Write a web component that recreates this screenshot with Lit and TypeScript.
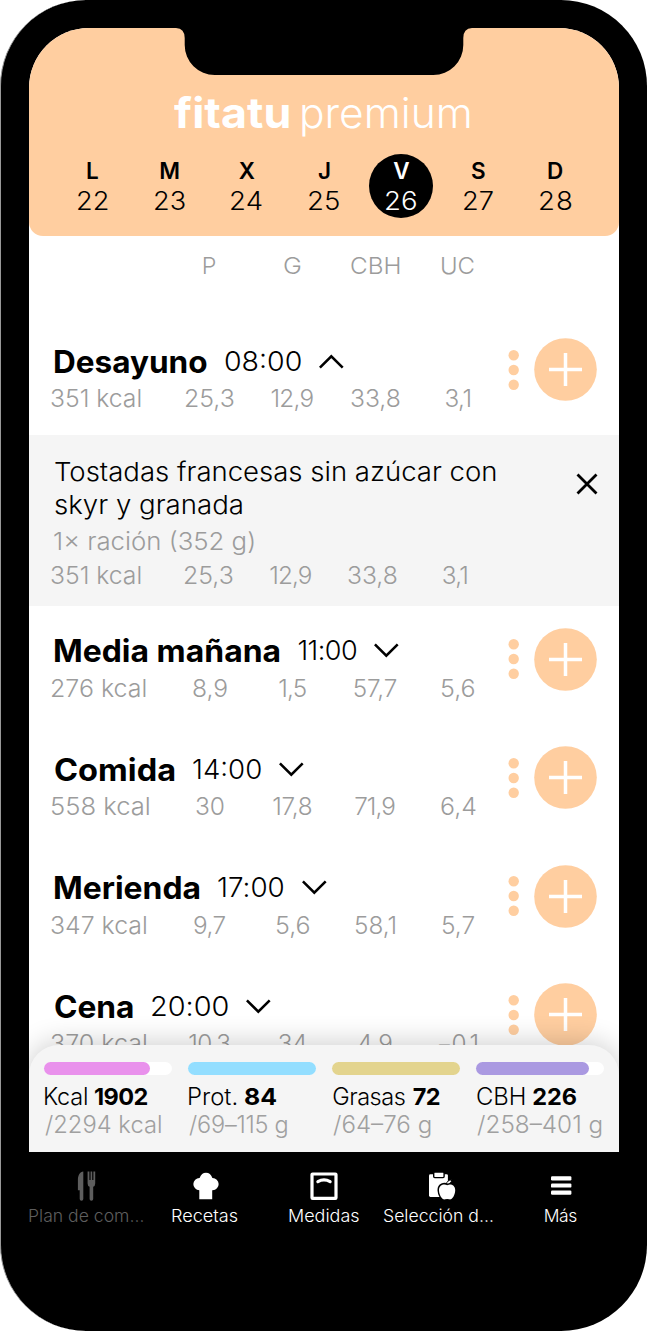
import { LitElement, html, css, svg, nothing } from "lit";
import { customElement, property } from "lit/decorators.js";

type Label = [text: string, width: number];

/** A single line of text, widened and tracked to span a given width. */
@customElement("fit-text")
class FitText extends LitElement {
  static styles = css`
    :host {
      display: inline-block;
      white-space: nowrap;
      flex: none;
    }
    .line {
      display: block;
      transform-origin: 0 50%;
    }
  `;
  @property() text = "";
  @property({ type: Number }) width = 0;

  updated() {
    const line = this.renderRoot.querySelector(".line") as HTMLElement;
    const style = getComputedStyle(this);
    const ctx = document.createElement("canvas").getContext("2d")!;
    ctx.font = `${style.fontWeight} ${style.fontSize} ${style.fontFamily}`;
    const m = ctx.measureText(this.text);
    const gaps = [...this.text].length - 1;
    const left = m.actualBoundingBoxLeft;
    const ink = m.actualBoundingBoxRight + left;
    const stretch = Math.min(Math.max(this.width / ink, 1), 1.09);
    this.style.width = `${this.width}px`;
    line.style.transform = `scaleX(${stretch})`;
    line.style.marginLeft = `${left * stretch + (gaps > 0 ? 0 : (this.width - ink * stretch) / 2)}px`;
    if (gaps > 0) line.style.letterSpacing = `${(this.width / stretch - ink) / gaps}px`;
  }

  render() {
    return html`<span class="line">${this.text}</span>`;
  }
}

const fit = ([text, width]: Label, cls = "") =>
  html`<fit-text class=${cls} .text=${text} .width=${width}></fit-text>`;

const days: [Label, Label][] = [
  [["L", 11], ["22", 29.5]],
  [["M", 18], ["23", 29.5]],
  [["X", 14], ["24", 31]],
  [["J", 11], ["25", 30]],
  [["V", 16], ["26", 30]],
  [["S", 13], ["27", 28.5]],
  [["D", 15], ["28", 31]],
];

const macroHeads: Label[] = [["P", 12], ["G", 17], ["CBH", 48], ["UC", 32]];

interface Meal {
  name: Label;
  time: Label;
  open?: boolean;
  kcal: Label;
  macros: Label[];
}

const meals: Meal[] = [
  { name: ["Desayuno", 151.5], time: ["08:00", 75.5], open: true, kcal: ["351 kcal", 89.5],
    macros: [["25,3", 49], ["12,9", 42], ["33,8", 49], ["3,1", 25]] },
  { name: ["Media mañana", 225], time: ["11:00", 57.5], kcal: ["276 kcal", 94.5],
    macros: [["8,9", 34.5], ["1,5", 26.5], ["57,7", 43], ["5,6", 34]] },
  { name: ["Comida", 120], time: ["14:00", 67.5], kcal: ["558 kcal", 98],
    macros: [["30", 28], ["17,8", 38.5], ["71,9", 40], ["6,4", 34.5]] },
  { name: ["Merienda", 145], time: ["17:00", 65], kcal: ["347 kcal", 95],
    macros: [["9,7", 31.5], ["5,6", 34], ["58,1", 40.5], ["5,7", 32.5]] },
  { name: ["Cena", 78.5], time: ["20:00", 75.5], kcal: ["370 kcal", 95],
    macros: [["10,3", 41], ["34", 27.5], ["4,9", 34], ["−0,1", 39]] },
];

const totals: { name: Label; value: Label; goal: Label; pct: number; tone: string }[] = [
  { name: ["Kcal", 42], value: ["1902", 52.5], goal: ["/2294 kcal", 116], pct: 83, tone: "pink" },
  { name: ["Prot.", 47.5], value: ["84", 31], goal: ["/69–115 g", 98.5], pct: 100, tone: "blue" },
  { name: ["Grasas", 71.5], value: ["72", 27], goal: ["/64–76 g", 98], pct: 100, tone: "sand" },
  { name: ["CBH", 48], value: ["226", 43.5], goal: ["/258–401 g", 125], pct: 88, tone: "violet" },
];

const icons = {
  plan: svg`<svg class="icon-plan" width="20" height="30" viewBox="0 0 20 30" fill="currentColor">
    <path d="M6.3 0.5V28a1.7 1.7 0 0 1-3.6 0V19.3H0.9V9C0.9 4 3 1 6.3 0.5Z"/>
    <path d="M10.6 0.6h1.8V9h1.2V0.6h1.6V9h1.2V0.6h1.8V12.6q0 2.6-2 3.2V28a1.8 1.8 0 0 1-3.6 0V15.8q-2-.6-2-3.2Z"/></svg>`,
  recipes: svg`<svg width="26" height="28" viewBox="0 0 26 28" fill="currentColor">
    <path d="M6.3 27.3V18.2H6.3A6.1 6.1 0 0 1 6.6 6Q8.5 0.8 13 0.8T19.4 6A6.1 6.1 0 0 1 19.7 18.2H19.2V27.3Z"/></svg>`,
  measures: svg`<svg width="28" height="28" viewBox="0 0 28 28" fill="none" stroke="currentColor" stroke-width="3.2">
    <rect x="2" y="2" width="24" height="24.4" rx="0.6"/>
    <path d="M7.9 9.6Q14 6.2 20.1 9.6" stroke-linecap="round"/></svg>`,
  picks: svg`<svg class="icon-picks" width="28" height="28" viewBox="0 0 28 28" fill="currentColor">
    <path d="M2.4 2.3H18.6Q19.9 2.3 19.9 3.6V25H2.4Q1 25 1 23.6V3.6Q1 2.3 2.4 2.3Z"/>
    <rect x="5.7" y="0" width="10.4" height="5.6" rx="1" stroke="#000" stroke-width="1.4"/>
    <path d="M19.2 13.2C22 11.4 27.4 12.6 27.2 18.4C27 23.4 24 28.2 21.2 27.3Q19.2 26.7 17.2 27.3C14.4 28.2 11.2 23.4 11 18.4C10.8 12.6 16.4 11.4 19.2 13.2Z" stroke="#000" stroke-width="3"/>
    <path d="M19.2 13.2C22 11.4 27.4 12.6 27.2 18.4C27 23.4 24 28.2 21.2 27.3Q19.2 26.7 17.2 27.3C14.4 28.2 11.2 23.4 11 18.4C10.8 12.6 16.4 11.4 19.2 13.2Z"/>
    <path d="M18.6 12.2Q18.4 8.6 23.6 7.8Q23.8 11.8 18.6 12.2Z" stroke="#000" stroke-width="1"/></svg>`,
  more: svg`<svg width="21" height="28" viewBox="0 0 21 28" fill="currentColor">
    <rect x="0" y="4.2" width="20.4" height="4.2" rx="1.2"/>
    <rect x="0" y="11.4" width="20.4" height="4.2" rx="1.2"/>
    <rect x="0" y="18.6" width="20.4" height="4.2" rx="1.2"/></svg>`,
};

const tabs: { icon: keyof typeof icons; label: Label; current?: boolean }[] = [
  { icon: "plan", label: ["Plan de com…", 114.5], current: true },
  { icon: "recipes", label: ["Recetas", 66] },
  { icon: "measures", label: ["Medidas", 70.5] },
  { icon: "picks", label: ["Selección d…", 109] },
  { icon: "more", label: ["Más", 32.5] },
];

const chevron = (open?: boolean) => html`<svg class="chevron" width="25" height="15" viewBox="0 0 25 15"
  fill="none" stroke="#000" stroke-width="2.6">
  <path d=${open ? "M0.9 13.6 12.3 2.4 23.7 13.6" : "M0.9 1.4 12.3 12.6 23.7 1.4"} /></svg>`;

@customElement("app-root")
class AppRoot extends LitElement {
  static styles = css`
    :host {
      display: block;
      background: #fff;
      font-family: Inter, "Open Sans", sans-serif;
      font-weight: 330;
      color: #000;
    }
    * {
      box-sizing: border-box;
    }
    svg {
      display: block;
      flex: none;
    }
    .phone {
      height: 1331px;
      padding: 28px 28px 0;
      background: #000;
      border-left: 1px solid #999;
      border-radius: 86px;
      display: flex;
      flex-direction: column;
    }
    .screen {
      height: 1124.3px;
      flex: none;
      background: #fff;
      border-radius: 60px 60px 0 0;
      overflow: hidden;
      display: flex;
      flex-direction: column;
      position: relative;
    }
    .header {
      height: 207.7px;
      flex: none;
      background: #ffcea0;
      border-radius: 0 0 14px 14px;
      display: flex;
      flex-direction: column;
      align-items: center;
    }
    .notch {
      width: 296px;
      height: 47px;
      flex: none;
    }
    .brand {
      display: flex;
      align-items: baseline;
      gap: 13px;
      margin: 10px 4px 0 0;
      height: 56px;
      line-height: 56px;
      color: #fff;
    }
    .brand-name {
      font-size: 42px;
      font-weight: 700;
    }
    .brand-tier {
      font-size: 42px;
      font-weight: 300;
    }
    .days {
      display: grid;
      grid-template-columns: repeat(7, 77.2px);
      margin-top: 13px;
    }
    .day {
      width: 64px;
      height: 64px;
      justify-self: center;
      border-radius: 50%;
      display: flex;
      flex-direction: column;
      align-items: center;
    }
    .day-on {
      background: #000;
      color: #fff;
    }
    .day-name {
      font-size: 22.5px;
      font-weight: 600;
      line-height: 30px;
      margin-top: 2px;
    }
    .day-num {
      font-size: 25.3px;
      line-height: 30px;
    }
    .macros {
      display: grid;
      grid-template-columns: 117.5px repeat(4, 82.7px);
      padding-left: 22px;
      font-size: 24.3px;
      line-height: 30px;
      color: #9c9c9c;
      justify-items: center;
    }
    .macros-item {
      grid-template-columns: 117px repeat(4, 82px);
    }
    .kcal {
      justify-self: start;
    }
    .heads {
      height: 80.8px;
      flex: none;
      padding-top: 15px;
      font-size: 23.3px;
    }
    .meal {
      height: 118.5px;
      flex: none;
      display: flex;
    }
    .meal-main {
      width: 472px;
      padding-top: 26.3px;
    }
    .meal-title {
      display: flex;
      align-items: center;
      height: 38px;
      line-height: 38px;
      padding-left: 26px;
      margin-bottom: 2.7px;
      gap: 18.5px;
    }
    .meal-name {
      font-size: 31px;
      font-weight: 700;
    }
    .meal-time {
      font-size: 27px;
    }
    .chevron {
      margin: -1px 0 0 -0.5px;
    }
    .actions {
      display: flex;
      align-items: center;
      gap: 14px;
      height: 63px;
      margin-top: 21.7px;
      padding-left: 7px;
    }
    .item {
      height: 171px;
      flex: none;
      background: #f5f5f5;
      display: flex;
      padding-top: 20px;
    }
    .item-main {
      width: 546px;
    }
    .item-name {
      display: flex;
      flex-direction: column;
      align-items: flex-start;
      padding-left: 26px;
      font-size: 26px;
      font-weight: 350;
      line-height: 33.3px;
    }
    .portion {
      padding-left: 25.5px;
      margin-top: 2px;
      font-size: 24px;
      line-height: 36px;
      color: #9c9c9c;
    }
    .close {
      margin: 18.5px 0 0 1px;
    }
    .summary {
      position: absolute;
      left: 0;
      right: 0;
      bottom: 0;
      height: 107px;
      background: #f5f5f5;
      border-radius: 30px 30px 0 0;
      box-shadow: 0 -2px 28px rgba(0, 0, 0, 0.2);
      padding: 16.5px 0 0 15px;
      display: grid;
      grid-template-columns: repeat(4, 127.7px);
      column-gap: 16.4px;
      align-content: start;
    }
    .track {
      height: 13px;
      border-radius: 7px;
      background: #fff;
      margin-bottom: 8px;
    }
    .fill {
      height: 13px;
      border-radius: 7px;
    }
    .pink { background: #e991ec; }
    .blue { background: #93deff; }
    .sand { background: #e3d48e; }
    .violet { background: #aa99e1; }
    .total {
      display: flex;
      gap: 8px;
      padding-left: 1px;
      font-size: 23.5px;
      line-height: 28px;
    }
    .total-value {
      font-weight: 700;
    }
    .total-goal {
      color: #a0a0a0;
    }
    .tabs {
      display: grid;
      grid-template-columns: 118px 121px 116px 112px 134px;
      margin-left: -2px;
      padding-top: 18.7px;
      color: #fff;
      justify-items: center;
      width: 601px;
    }
    .tab {
      display: flex;
      flex-direction: column;
      align-items: center;
    }
    .tab-icon {
      height: 30px;
      display: flex;
      align-items: center;
    }
    .icon-plan {
      margin-left: 2px;
    }
    .icon-picks {
      margin-left: 8px;
    }
    .tab-label {
      font-size: 17.5px;
      font-weight: 350;
      line-height: 24px;
      margin-top: 3px;
    }
    .tab-on {
      color: #5e5e5e;
    }
  `;

  private renderMacros(kcal: Label, macros: Label[], cls = "") {
    return html`<div class="macros ${cls}">${fit(kcal, "kcal")}${macros.map((m) => fit(m))}</div>`;
  }

  private renderMeal(meal: Meal) {
    return html`
      <div class="meal">
        <div class="meal-main">
          <div class="meal-title">
            ${fit(meal.name, "meal-name")}${fit(meal.time, "meal-time")}${chevron(meal.open)}
          </div>
          ${this.renderMacros(meal.kcal, meal.macros)}
        </div>
        <div class="actions">
          <svg width="12" height="42" viewBox="0 0 12 42" fill="#ffcea0">
            <circle cx="5.7" cy="6.2" r="5.2" /><circle cx="5.7" cy="21" r="5.2" /><circle cx="5.7" cy="35.8" r="5.2" />
          </svg>
          <svg width="63" height="63" viewBox="0 0 63 63">
            <circle cx="31.5" cy="31.5" r="31.3" fill="#ffcea0" />
            <path d="M15 31.5H48M31.5 15V48" stroke="#fff" stroke-width="3.5" />
          </svg>
        </div>
      </div>
    `;
  }

  private renderItem() {
    return html`
      <div class="item">
        <div class="item-main">
          <div class="item-name">
            ${fit(["Tostadas francesas sin azúcar con", 441])}${fit(["skyr y granada", 187.5])}
          </div>
          <div class="portion">${fit(["1× ración (352 g)", 199.5])}</div>
          ${this.renderMacros(["351 kcal", 89.5], [["25,3", 49], ["12,9", 41.5], ["33,8", 49], ["3,1", 24.5]], "macros-item")}
        </div>
        <svg class="close" width="22" height="22" viewBox="0 0 22 22" stroke="#000" stroke-width="2.8">
          <path d="M1.5 1.5 20.5 20.5M20.5 1.5 1.5 20.5" />
        </svg>
      </div>
    `;
  }

  render() {
    return html`
      <div class="phone">
        <div class="screen">
          <div class="header">
            <svg class="notch" viewBox="0 0 296 47">
              <path d="M0 0Q8.700 0.500 8.700 10V17A30 30 0 0 0 38.700 47H257.300A30 30 0 0 0 287.300 17V10Q287.300 0.500 296 0Z" fill="#000" />
            </svg>
            <div class="brand">
              ${fit(["fitatu", 115], "brand-name")}${fit(["premium", 168], "brand-tier")}
            </div>
            <div class="days">
              ${days.map(([name, num], i) => html`
                <div class="day ${i === 4 ? "day-on" : ""}">
                  ${fit(name, "day-name")}${fit(num, "day-num")}
                </div>`)}
            </div>
          </div>
          <div class="macros heads"><span></span>${macroHeads.map((m) => fit(m))}</div>
          ${meals.map((m) => html`${this.renderMeal(m)}${m.open ? this.renderItem() : nothing}`)}
          <div class="summary">
            ${totals.map((t) => html`
              <div>
                <div class="track"><div class="fill ${t.tone}" style="width:${t.pct}%"></div></div>
                <div class="total">${fit(t.name)}${fit(t.value, "total-value")}</div>
                <div class="total total-goal">${fit(t.goal)}</div>
              </div>`)}
          </div>
        </div>
        <div class="tabs">
          ${tabs.map((t) => html`
            <div class="tab ${t.current ? "tab-on" : ""}">
              <div class="tab-icon">${icons[t.icon]}</div>
              ${fit(t.label, "tab-label")}
            </div>`)}
        </div>
      </div>
    `;
  }
}
